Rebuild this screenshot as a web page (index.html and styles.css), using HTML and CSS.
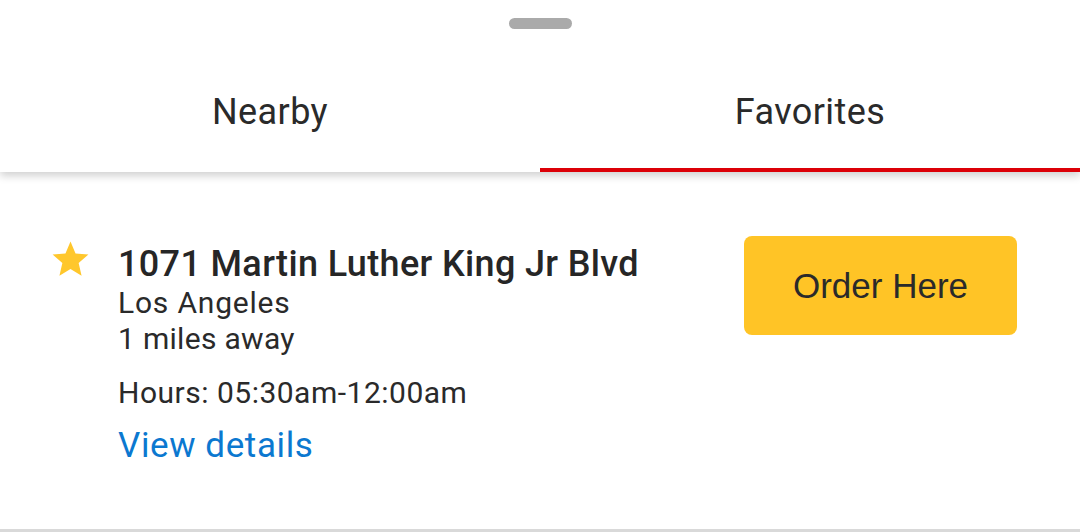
FILE: index.html
```html
<!DOCTYPE html>
<html>
<head>
<meta charset="utf-8">
<link rel="stylesheet" href="styles.css">
</head>
<body>
<div class="sheet">
  <header class="header">
    <div class="handle"></div>
    <nav class="tabs">
      <div class="tab">Nearby</div>
      <div class="tab active">Favorites</div>
    </nav>
  </header>
  <main class="content">
    <section class="card">
      <svg class="star" viewBox="0 0 24 24" width="43" height="43"><path fill="#FFC72C" d="M12 17.27L18.18 21l-1.64-7.03L22 9.24l-7.19-.61L12 2 9.19 8.63 2 9.24l5.46 4.73L5.82 21z"/></svg>
      <div class="info">
        <div class="title">1071 Martin Luther King Jr Blvd</div>
        <div class="line">Los Angeles</div>
        <div class="line line-tight">1 miles away</div>
        <div class="hours">Hours: 05:30am-12:00am</div>
        <a class="details">View details</a>
      </div>
      <button class="order">Order Here</button>
    </section>
  </main>
  <div class="divider"></div>
</div>
</body>
</html>
```
FILE: styles.css
```css
html, body {
  margin: 0;
  padding: 0;
  background: #fff;
}
body {
  width: 1080px;
  height: 532px;
  overflow: hidden;
  font-family: Roboto, "Liberation Sans", sans-serif;
  color: #262626;
}
.sheet {
  display: flex;
  flex-direction: column;
  height: 532px;
}
.header {
  position: relative;
  z-index: 1;
  background: #fff;
  height: 172px;
  box-shadow: 0 4px 8px rgba(0, 0, 0, 0.18);
  display: flex;
  flex-direction: column;
}
.handle {
  width: 63px;
  height: 11px;
  border-radius: 6px;
  background: #aaaaaa;
  margin: 18px auto 0;
}
.tabs {
  flex: 1;
  display: flex;
}
.tab {
  flex: 1;
  text-align: center;
  font-size: 36px;
  letter-spacing: 0.4px;
  line-height: 40px;
  padding-top: 63px;
  color: #2a2a2a;
  box-sizing: border-box;
  border-bottom: 4px solid transparent;
}
.tab.active {
  border-bottom-color: #dc0008;
}
.content {
  flex: 1;
}
.card {
  display: flex;
  align-items: flex-start;
  padding: 0 63px 0 49px;
}
.star {
  margin-top: 66px;
  flex-shrink: 0;
}
.info {
  flex: 1;
  margin-left: 26px;
  padding-top: 72px;
  display: flex;
  flex-direction: column;
}
.title {
  font-size: 36px;
  font-weight: 500;
  letter-spacing: 0.35px;
  line-height: 41px;
  color: #262626;
}
.line {
  font-size: 30px;
  letter-spacing: 0.8px;
  line-height: 36px;
  color: #2a2a2a;
}
.line-tight {
  letter-spacing: 0.3px;
}
.hours {
  font-size: 30px;
  letter-spacing: 0.5px;
  line-height: 36px;
  margin-top: 18px;
  color: #2a2a2a;
}
.details {
  font-size: 35px;
  letter-spacing: 0.6px;
  line-height: 40px;
  margin-top: 15px;
  color: #0b78d0;
}
.order {
  flex-shrink: 0;
  margin-top: 64px;
  width: 273px;
  height: 99px;
  border: none;
  border-radius: 8px;
  background: #ffc426;
  color: #2a2a2a;
  font-family: "Liberation Sans", Arial, sans-serif;
  font-size: 35px;
  padding: 0;
}
.divider {
  height: 3px;
  background: #d9d9d9;
}
```
